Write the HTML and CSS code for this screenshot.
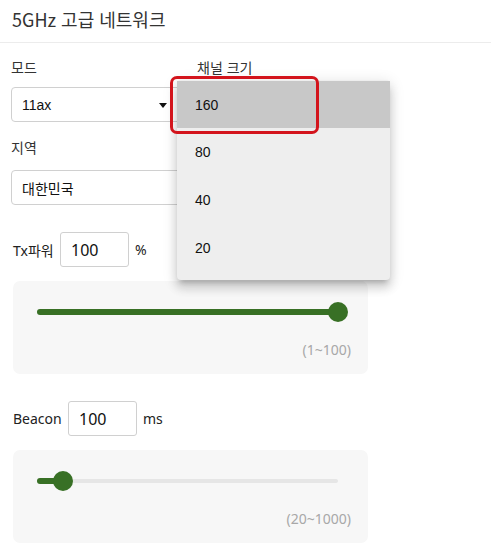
FILE: index.html
```html
<!DOCTYPE html>
<html lang="ko">
<head>
<meta charset="utf-8">
<link rel="stylesheet" href="styles.css">
</head>
<body>
<div class="page">
  <header class="header"><h1 class="title">5GHz 고급 네트워크</h1></header>
  <main class="content">
    <div class="grid">
      <div class="field">
        <div class="label">모드</div>
        <div class="select"><span class="select-text">11ax</span><span class="arrow"></span></div>
      </div>
      <div class="field field-right">
        <div class="label">채널 크기</div>
      </div>
    </div>
    <div class="field region">
      <div class="label">지역</div>
      <div class="select"><span class="select-text ko">대한민국</span></div>
    </div>

    <div class="num-row tx">
      <span class="num-label">Tx파워</span>
      <span class="num-input">100</span>
      <span class="unit">%</span>
    </div>
    <div class="slider-panel">
      <div class="slider">
        <div class="rail"></div>
        <div class="fill" style="width:100%"></div>
        <div class="thumb" style="left:100%"></div>
      </div>
      <div class="range">(1~100)</div>
    </div>

    <div class="num-row beacon">
      <span class="num-label">Beacon</span>
      <span class="num-input">100</span>
      <span class="unit">ms</span>
    </div>
    <div class="slider-panel">
      <div class="slider">
        <div class="rail"></div>
        <div class="fill" style="width:8.6%"></div>
        <div class="thumb" style="left:8.6%"></div>
      </div>
      <div class="range">(20~1000)</div>
    </div>
  </main>

  <ul class="menu">
    <li class="menu-item selected">160</li>
    <li class="menu-item">80</li>
    <li class="menu-item">40</li>
    <li class="menu-item">20</li>
  </ul>
  <div class="highlight-box"></div>
</div>
</body>
</html>
```

FILE: styles.css
```css
* { box-sizing: border-box; }
html, body { margin: 0; padding: 0; background: #fff; }
body { font-family: "Noto Sans CJK KR", "Noto Sans", sans-serif; color: #222; }
.page { position: relative; width: 491px; height: 553px; overflow: hidden; }

.header { height: 43px; border-bottom: 1px solid #ececec; padding: 0 12px; display: flex; align-items: center; }
.title { margin: 0; font-size: 18px; font-weight: 400; color: #333; line-height: 22px; margin-top: -5px; }

.content { padding: 0 11px; }
.grid { display: grid; grid-template-columns: 175px 1fr; column-gap: 11px; }
.field { display: flex; flex-direction: column; }
.label { font-size: 14px; line-height: 20px; color: #333; margin-top: 14px; height: 20px; }
.select { margin-top: 10px; height: 35px; border: 1px solid #d0d0d0; border-radius: 4px; display: flex; align-items: center; padding: 0 10px; position: relative; background: #fff; }
.select-text { font-family: "Liberation Sans", Arial, sans-serif; font-size: 14px; color: #111; }
.select-text.ko { font-family: "Noto Sans CJK KR", sans-serif; }
.arrow { position: absolute; left: 147px; top: 15px; width: 0; height: 0; border-left: 4px solid transparent; border-right: 4px solid transparent; border-top: 5px solid #111; }
.region { width: 175px; }
.region .label { margin-top: 15px; }
.region .select { margin-top: 13px; }

.num-row { display: flex; align-items: center; padding-left: 2px; margin-top: 27px; height: 35px; font-family: "Noto Sans", sans-serif; font-size: 14px; color: #222; }
.num-label { font-family: "Noto Sans", "Noto Sans CJK KR", sans-serif; }
.num-input { width: 69px; height: 35px; border: 1px solid #d0d0d0; border-radius: 3px; margin-left: 6px; display: flex; align-items: center; padding-left: 10px; font-size: 16px; color: #111; }
.unit { margin-left: 6px; }
.tx .num-label { width: 41px; }
.beacon .num-label { width: 49px; }

.slider-panel { margin: 14px 0 0 2px; width: 355px; height: 93px; background: #f7f7f7; border-radius: 7px; padding: 25px 30px 0 24px; }
.slider { position: relative; height: 12px; }
.rail { position: absolute; left: 0; right: 0; top: 4px; height: 4px; background: #e6e6e6; border-radius: 2px; }
.fill { position: absolute; left: 0; top: 3px; height: 6px; background: #387025; border-radius: 3px; }
.thumb { position: absolute; top: -4px; width: 20px; height: 20px; margin-left: -10px; border-radius: 50%; background: #387025; }
.range { text-align: right; margin-top: 22px; margin-right: -13px; font-family: "Noto Sans", sans-serif; font-size: 14px; color: #a8a8a8; line-height: 20px; }

.menu { position: absolute; left: 177px; top: 80px; width: 213px; margin: 0; padding: 1px 0 8px; list-style: none; background: #eeeeee; border-radius: 4px; box-shadow: 0 5px 5px -3px rgba(0,0,0,0.2), 0 8px 10px 1px rgba(0,0,0,0.12), 0 3px 14px 2px rgba(0,0,0,0.1); }
.menu-item { height: 48px; display: flex; align-items: center; padding-left: 18px; font-family: "Liberation Sans", Arial, sans-serif; font-size: 14px; color: #111; }
.menu-item.selected { background: #c8c8c8; height: 47px; }

.highlight-box { position: absolute; left: 170px; top: 76px; width: 149px; height: 58px; border: 3px solid #d3141c; border-radius: 7px; }
```
